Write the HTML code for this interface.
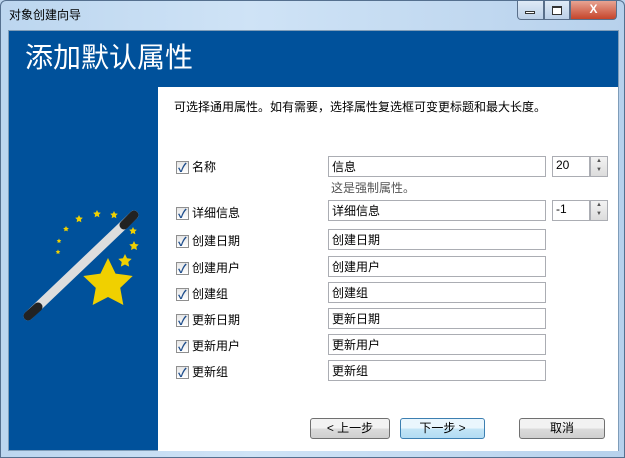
<!DOCTYPE html><html><head><meta charset="utf-8"><style>
*{box-sizing:border-box}body{margin:0;width:625px;height:458px;overflow:hidden;font:12px "Liberation Sans","Noto Sans CJK SC",sans-serif;background:#bcd5ee}
.win{position:absolute;left:0;top:0;width:625px;height:458px;background:linear-gradient(90deg,#bcd6ef,#cfe3f6 40%,#b7d1ec);border:1px solid #55708f;border-radius:6px 6px 0 0}
.title{position:absolute;left:8px;top:5px;font-size:12px;color:#000}
.blue{position:absolute;left:7px;top:29px;width:611px;height:421px;background:#00519b;border:1px solid #7f9db9}
.h{position:absolute;left:24px;top:35px;font-size:28px;color:#fff}
.panel{position:absolute;left:157px;top:86px;width:460px;height:364px;background:#fff}
.abs{position:absolute}
.cb{position:absolute;width:13px;height:13px;border:1px solid #8f8f8f;background:linear-gradient(#e6e6e6,#fff);}
.cb:after{content:"✓";position:absolute;left:1px;top:-3px;font-size:12px;color:#1f4e8c;font-weight:bold}
.in{position:absolute;height:21px;border:1px solid #abadb3;background:#fff;padding:1px 3px;font-size:12px}
.sp{position:absolute;width:18px;height:21px;border:1px solid #abadb3;background:linear-gradient(#f3f3f3,#dcdcdc);font-size:6px;color:#555;text-align:center;line-height:9px}
.btn{position:absolute;height:21px;border:1px solid #707070;border-radius:3px;background:linear-gradient(#f2f2f2 50%,#dcdcdc 50%,#cfcfcf);text-align:center;line-height:18px}
.ctl{position:absolute;top:0;height:19px;border:1px solid #5a6f8a;border-top:none}
</style></head><body><div class="win">
<div class="title">对象创建向导</div>
<div class="ctl" style="left:516px;width:27px;border-radius:0 0 0 4px;background:linear-gradient(#dfeaf6,#bcd0e8)"></div>
<div class="ctl" style="left:543px;width:26px;background:linear-gradient(#dfeaf6,#bcd0e8)"></div>
<div class="ctl" style="left:569px;width:47px;border-radius:0 0 4px 0;background:linear-gradient(#e8a493,#c5452b);color:#fff;text-align:center;font-weight:bold;line-height:17px">X</div>
<div class="abs" style="left:524px;top:10px;width:10px;height:3px;border:1px solid #333;background:#fff"></div>
<div class="abs" style="left:551px;top:5px;width:10px;height:9px;border:1px solid #333;border-top-width:2px;background:#fff"></div>
<div class="blue"></div>
<div class="h">添加默认属性</div>
<svg class="abs" style="left:15px;top:200px" width="130" height="120" viewBox="0 0 130 120">
<defs><polygon id="s" points="0,-10 2.9,-4 9.5,-3.1 4.7,1.5 5.9,8.1 0,5 -5.9,8.1 -4.7,1.5 -9.5,-3.1 -2.9,-4"/></defs>
<g fill="#f0d000">
<use href="#s" transform="translate(109,60) scale(0.7)"/><use href="#s" transform="translate(118,45) scale(0.5)"/><use href="#s" transform="translate(117,30) scale(0.4)"/><use href="#s" transform="translate(98,14) scale(0.4)"/><use href="#s" transform="translate(81,13) scale(0.4)"/><use href="#s" transform="translate(63,18) scale(0.4)"/><use href="#s" transform="translate(50,28) scale(0.3)"/><use href="#s" transform="translate(43,40) scale(0.25)"/><use href="#s" transform="translate(42,51) scale(0.25)"/></g>
<line x1="12" y1="115" x2="118" y2="14" stroke="#ddd" stroke-width="9" stroke-linecap="round"/>
<line x1="12" y1="115" x2="22" y2="106" stroke="#222" stroke-width="9" stroke-linecap="round"/>
<line x1="108" y1="24" x2="118" y2="14" stroke="#222" stroke-width="9" stroke-linecap="round"/>
<use href="#s" fill="#f0d000" transform="translate(92,83) scale(2.6)"/>
</svg>
<div class="panel"></div>
<div class="abs" style="left:173px;top:97px">可选择通用属性。如有需要，选择属性复选框可变更标题和最大长度。</div>
<div class="cb" style="left:175px;top:160px"></div><div class="abs" style="left:191px;top:157px">名称</div>
<div class="in" style="left:327px;top:155px;width:218px">信息</div>
<div class="in" style="left:551px;top:155px;width:38px">20</div><div class="sp" style="left:589px;top:155px">▲<br>▼</div>
<div class="abs" style="left:330px;top:178px;color:#555">这是强制属性。</div>
<div class="cb" style="left:175px;top:206px"></div><div class="abs" style="left:191px;top:203px">详细信息</div>
<div class="in" style="left:327px;top:199px;width:218px">详细信息</div>
<div class="in" style="left:551px;top:199px;width:38px">-1</div><div class="sp" style="left:589px;top:199px">▲<br>▼</div>
<div class="cb" style="left:175px;top:234px"></div><div class="abs" style="left:191px;top:231px">创建日期</div><div class="in" style="left:327px;top:228px;width:218px">创建日期</div>
<div class="cb" style="left:175px;top:261px"></div><div class="abs" style="left:191px;top:258px">创建用户</div><div class="in" style="left:327px;top:255px;width:218px">创建用户</div>
<div class="cb" style="left:175px;top:287px"></div><div class="abs" style="left:191px;top:284px">创建组</div><div class="in" style="left:327px;top:281px;width:218px">创建组</div>
<div class="cb" style="left:175px;top:313px"></div><div class="abs" style="left:191px;top:310px">更新日期</div><div class="in" style="left:327px;top:307px;width:218px">更新日期</div>
<div class="cb" style="left:175px;top:339px"></div><div class="abs" style="left:191px;top:336px">更新用户</div><div class="in" style="left:327px;top:333px;width:218px">更新用户</div>
<div class="cb" style="left:175px;top:365px"></div><div class="abs" style="left:191px;top:362px">更新组</div><div class="in" style="left:327px;top:359px;width:218px">更新组</div>
<div class="btn" style="left:309px;top:417px;width:80px">&lt; 上一步</div>
<div class="btn" style="left:399px;top:417px;width:85px;border-color:#3c7fb1;background:linear-gradient(#eaf6fd 50%,#c4e5f6 50%,#b2dcf3)">下一步 &gt;</div>
<div class="btn" style="left:518px;top:417px;width:86px">取消</div>
</div></body></html>
